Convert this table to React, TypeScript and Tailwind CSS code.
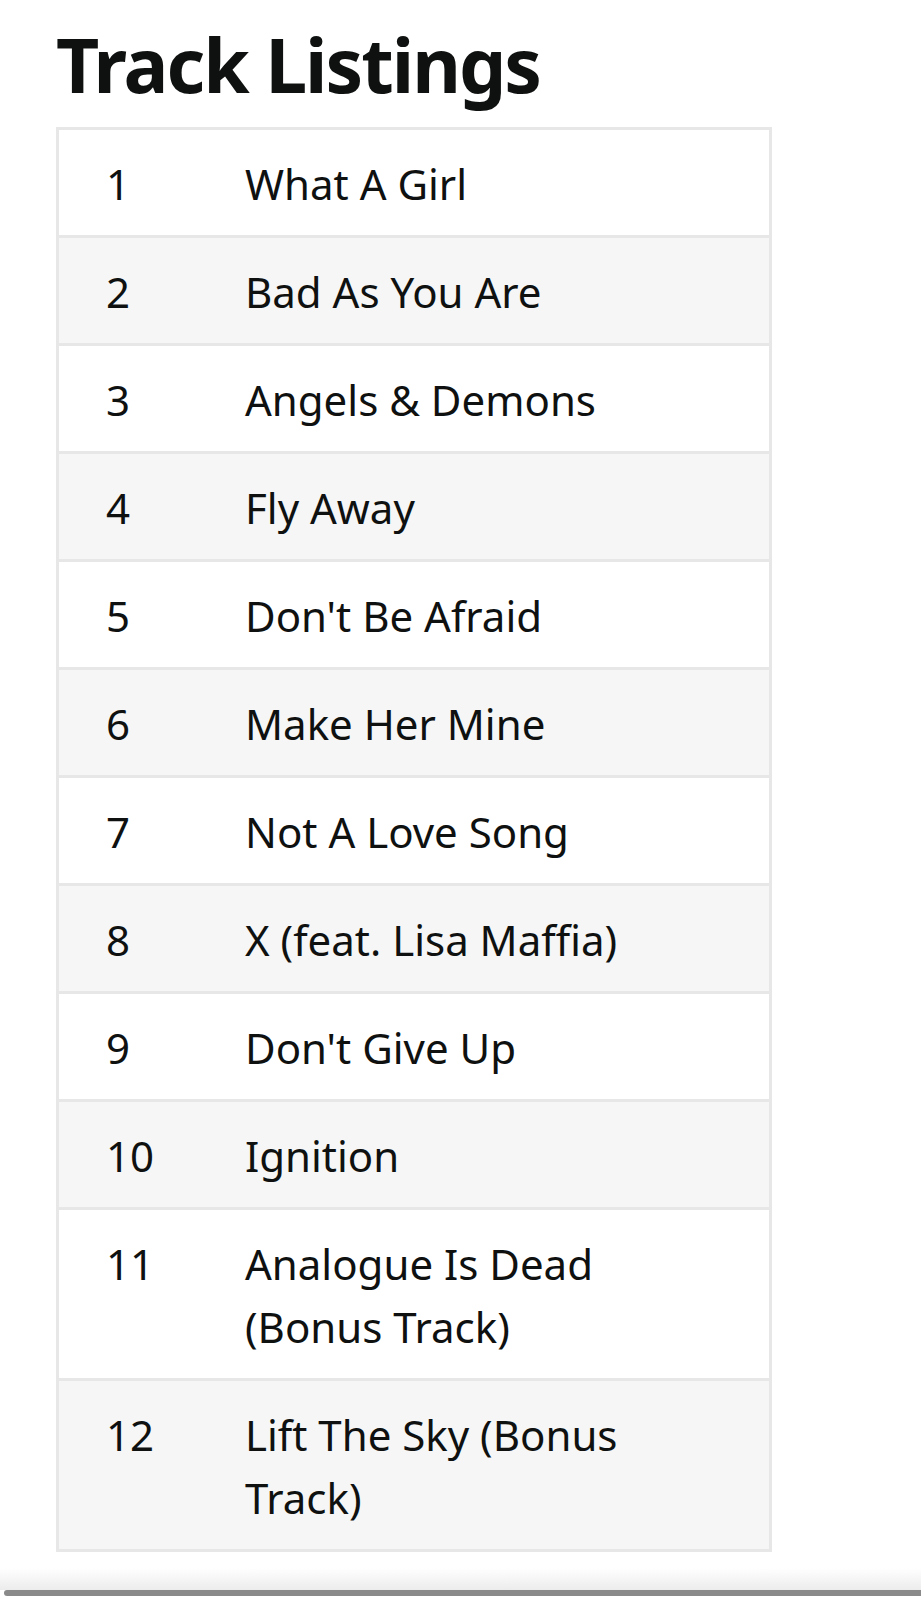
import React from "react";

const tracks: [string, string][] = [
  ["1", "What A Girl"],
  ["2", "Bad As You Are"],
  ["3", "Angels & Demons"],
  ["4", "Fly Away"],
  ["5", "Don't Be Afraid"],
  ["6", "Make Her Mine"],
  ["7", "Not A Love Song"],
  ["8", "X (feat. Lisa Maffia)"],
  ["9", "Don't Give Up"],
  ["10", "Ignition"],
  ["11", "Analogue Is Dead (Bonus Track)"],
  ["12", "Lift The Sky (Bonus Track)"],
];

export default function App() {
  return (
    <div className="w-[921px] h-[1600px] bg-white text-[#0f1111] font-['Noto_Sans',sans-serif] flex flex-col">
      <div className="pl-[56px]">
        <h1 className="mt-[26px] text-[75px] leading-[76px] font-bold tracking-[-2px]">Track Listings</h1>
        <div className="mt-[25px] w-[716px] border-[3px] border-[#e7e7e7] border-b-0">
          {tracks.map(([n, t], i) => (
            <div
              key={n}
              className={`grid grid-cols-[186px_1fr] border-b-[3px] border-[#e7e7e7] pt-[22px] pb-[20px] text-[42px] leading-[63px] ${
                i % 2 === 1 ? "bg-[#f6f6f6]" : "bg-white"
              }`}
            >
              <div className="pl-[47px]">{n}</div>
              <div className="pr-[40px]">{t}</div>
            </div>
          ))}
        </div>
      </div>
      <div className="flex-1" />
      <div className="h-[22px] bg-gradient-to-b from-white to-[#ececec]" />
      <div className="h-[6px] ml-[4px] rounded-l-full bg-[#8a8a8a]" />
      <div className="h-[4px] bg-white" />
    </div>
  );
}
